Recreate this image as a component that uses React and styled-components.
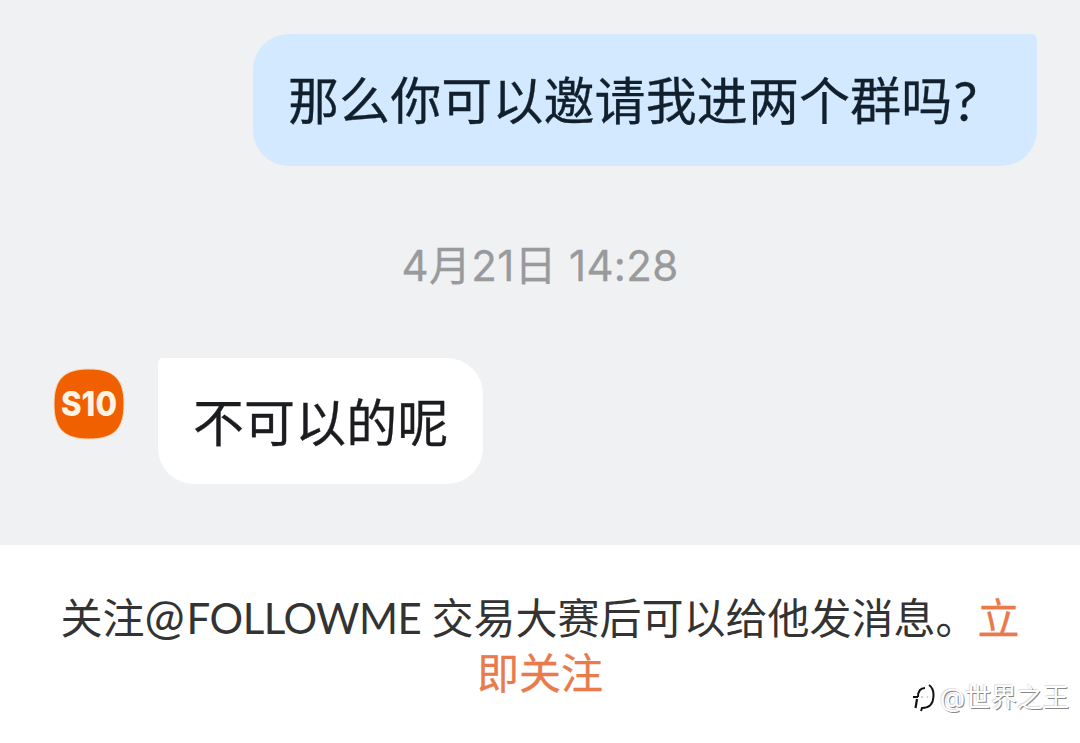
import React from 'react';
import styled, { createGlobalStyle } from 'styled-components';

const GlobalStyle = createGlobalStyle`
  * {
    box-sizing: border-box;
  }
  body {
    margin: 0;
    background-color: white;
    font-family: Inter, 'Noto Sans CJK SC', sans-serif;
  }
`;
const PageStyle = styled.div`
  display: flex;
  flex-direction: column;
  position: relative;
  width: 1080px;
  height: 743px;
  overflow: hidden;
`;
const ChatStyle = styled.div`
  display: flex;
  flex-direction: column;
  height: 545px;
  padding: 34px 43px 0 53px;
  background-color: #eff1f3;
`;
const BubbleStyle = styled.div`
  display: flex;
  align-items: center;
  width: ${(props) => (props.$mine ? '784px' : '325px')};
  height: ${(props) => (props.$mine ? '132px' : '126px')};
  padding: ${(props) => (props.$mine ? '1px' : '4px')} 0 0 35px;
  border-radius: ${(props) =>
    props.$mine ? '36px 6px 36px 36px' : '5px 36px 36px 36px'};
  background-color: ${(props) => (props.$mine ? '#d2e9ff' : 'white')};
  color: ${(props) => (props.$mine ? '#12202d' : '#1b1c1f')};
  font-family: Lato, 'Noto Sans CJK SC', sans-serif;
  font-size: 51px;
  line-height: 60px;
  letter-spacing: 0.1px;
  white-space: nowrap;
  -webkit-text-stroke: 0.3px currentColor;
`;
const QuestionStyle = styled.span`
  margin-left: 1px;
  font-size: 54px;
`;
const MineRowStyle = styled.div`
  display: flex;
  justify-content: flex-end;
`;
const OtherRowStyle = styled.div`
  display: flex;
  align-items: flex-start;
  gap: 33px;
`;
const TimeStyle = styled.div`
  height: 192px;
  padding: 70px 10px 0 0;
  color: #999a9b;
  font-size: 42px;
  line-height: 60px;
  letter-spacing: 0.3px;
  text-align: center;
  white-space: nowrap;
  -webkit-text-stroke: 0.3px currentColor;
`;
const AvatarStyle = styled.svg`
  flex: none;
  width: 72px;
  height: 72px;
  margin-top: 10px;
`;
const FollowStyle = styled.div`
  height: 198px;
  padding-top: 46px;
  color: #333333;
  font-size: 42px;
  line-height: 55px;
  text-align: center;
  white-space: nowrap;
`;
const AtStyle = styled.span`
  margin-right: 2px;
  font-family: Lato, sans-serif;
  font-size: 48px;
  line-height: 1;
`;
const NameStyle = styled.span`
  font-family: Lato, sans-serif;
  letter-spacing: -0.5px;
`;
const LinkStyle = styled.span`
  color: #e87a4c;
  -webkit-text-stroke: 0.3px currentColor;
`;
const MarkStyle = styled.div`
  display: flex;
  align-items: center;
  position: absolute;
  right: 11px;
  bottom: 27px;
  color: white;
  font-size: 26px;
  line-height: 36px;
  text-shadow: 1px 1px 0 #888888, -1px -1px 1px #dddddd;
`;
const MarkIconStyle = styled.svg`
  width: 28px;
  height: 32px;
`;

const App = () => {
  return (
    <>
      <GlobalStyle />
      <PageStyle>
        <ChatStyle>
          <MineRowStyle>
            <BubbleStyle $mine>
              那么你可以邀请我进两个群吗<QuestionStyle>?</QuestionStyle>
            </BubbleStyle>
          </MineRowStyle>
          <TimeStyle>4月21日 14:28</TimeStyle>
          <OtherRowStyle>
            <AvatarStyle viewBox="0 0 72 72">
              <path
                d="M36 1C61 1 71 11 71 36S61 71 36 71 1 61 1 36 11 1 36 1Z"
                fill="#f06000"
                stroke="#fbd9b8"
                strokeWidth="1"
              />
              <text
                x="8"
                y="48"
                fill="#fff3e4"
                fontFamily="Inter, sans-serif"
                fontSize="34"
                fontWeight="800"
                textLength="56"
                lengthAdjust="spacingAndGlyphs"
              >
                S10
              </text>
            </AvatarStyle>
            <BubbleStyle>不可以的呢</BubbleStyle>
          </OtherRowStyle>
        </ChatStyle>
        <FollowStyle>
          关注<AtStyle>@</AtStyle>
          <NameStyle>FOLLOWME </NameStyle>交易大赛后可以给他发消息。
          <LinkStyle>
            立<br />
            即关注
          </LinkStyle>
        </FollowStyle>
        <MarkStyle>
          <MarkIconStyle viewBox="0 0 28 32" fill="none" stroke="#111111">
            <path d="M13 6Q6 6 6 15M1 15H6" strokeWidth="2" />
            <path d="M5 17L3.5 26" strokeWidth="2.2" />
            <path d="M9 15H11M15 15H16" stroke="#999999" />
            <path
              d="M17 3Q21.5 6 21.5 13Q21.5 20 18 23.5Q15 26 10 26L9 29"
              strokeWidth="2"
            />
          </MarkIconStyle>
          @世界之王
        </MarkStyle>
      </PageStyle>
    </>
  );
};
export default App;
